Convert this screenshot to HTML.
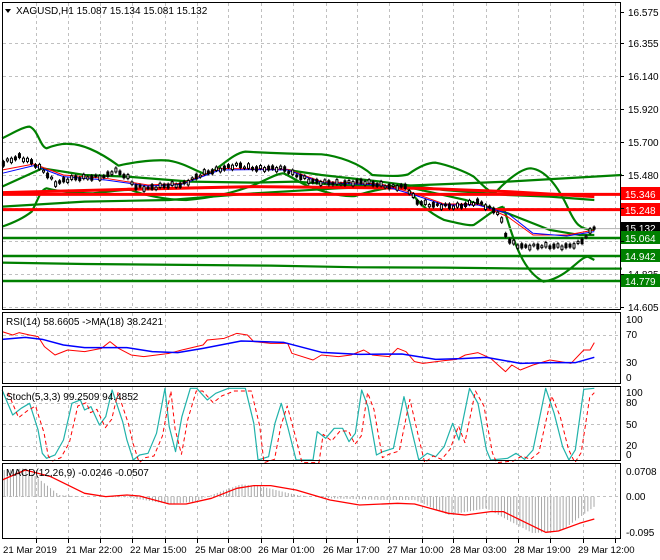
<!DOCTYPE html>
<html><head><meta charset="utf-8"><style>
html,body{margin:0;padding:0;background:#fff;}
svg{display:block;font-family:"Liberation Sans",sans-serif;font-size:10.5px;}
</style></head><body>
<svg id="s" width="660" height="560" viewBox="0 0 660 560" xmlns="http://www.w3.org/2000/svg">
<rect width="660" height="560" fill="#fff"/>
<g id="grid" stroke="#c0c0c0" stroke-dasharray="3,3" stroke-width="1"></g>
<g transform="scale(0.423,0.3333)" fill="none" stroke-linejoin="round">
 <g stroke="#008000" stroke-width="2.2">
  <path vector-effect="non-scaling-stroke" d="M5,415 C30,400 55,380 70,380 C90,390 95,440 110,445 C130,435 150,430 165,432 C190,432 230,450 280,497 C320,485 370,478 400,482 C440,490 470,520 490,523 C520,505 550,460 580,455 C620,458 700,462 760,463 C800,468 850,490 880,525 C910,528 950,530 965,523 C990,500 1010,488 1030,488 C1060,495 1100,515 1120,530 C1140,555 1160,580 1170,580"/>
  <path vector-effect="non-scaling-stroke" d="M5,680 C40,665 60,650 75,635 C90,600 95,570 110,565 C140,575 180,580 220,580 C260,575 290,568 310,570 C340,585 390,600 440,600 C500,595 560,575 600,555 C630,540 655,520 670,520 C690,530 720,560 760,572 C790,585 820,590 840,588 C880,570 930,560 960,560 C980,590 1000,630 1050,660 C1090,672 1110,678 1120,675 C1150,650 1170,625 1190,620"/>
  <polyline vector-effect="non-scaling-stroke" points="5,560 100,505 200,525 300,530 450,545 600,548 700,545 800,555 960,560 1100,600 1200,640 1300,690 1370,705 1405,705"/>
  <path vector-effect="non-scaling-stroke" d="M1170,580 C1190,550 1230,505 1255,505 C1290,510 1320,560 1345,630 C1360,670 1370,690 1405,690"/>
  <path vector-effect="non-scaling-stroke" d="M1190,620 C1210,700 1230,810 1285,845 C1340,835 1370,770 1390,770 L1405,780"/>
  <polyline vector-effect="non-scaling-stroke" points="680,510 760,525 900,545 1050,570 1200,585 1300,590 1405,600"/>
  <polyline vector-effect="non-scaling-stroke" points="5,620 200,605 400,600 600,580 800,565 1000,555 1200,545 1470,525"/>
  <polyline vector-effect="non-scaling-stroke" points="5,788 200,792 640,797 850,802 1050,803 1260,806 1470,806"/>
 </g>
 <line x1="5" y1="686" x2="1470" y2="686" stroke="#b0b0b0" stroke-width="1" vector-effect="non-scaling-stroke"/>
 <line x1="5" y1="714" x2="1470" y2="714" stroke="#008000" stroke-width="2.5" vector-effect="non-scaling-stroke"/>
 <line x1="5" y1="768" x2="1470" y2="768" stroke="#008000" stroke-width="2.5" vector-effect="non-scaling-stroke"/>
 <line x1="5" y1="843" x2="1470" y2="843" stroke="#008000" stroke-width="2.5" vector-effect="non-scaling-stroke"/>
 <polyline points="5,578 300,568 600,560 1000,565 1200,575 1405,590" stroke="#ff0000" stroke-width="3" vector-effect="non-scaling-stroke"/>
 <line x1="5" y1="583" x2="1470" y2="583" stroke="#ff0000" stroke-width="3" vector-effect="non-scaling-stroke"/>
 <line x1="5" y1="629" x2="1470" y2="629" stroke="#ff0000" stroke-width="3" vector-effect="non-scaling-stroke"/>
 <polyline points="5,510 80,492 150,525 250,535 350,555 430,550 520,505 600,507 680,508 760,545 900,552 980,580 1050,612 1130,612 1200,650 1260,705 1340,705 1405,690" stroke="#ff0000" stroke-width="1" vector-effect="non-scaling-stroke"/>
 <polyline points="5,520 80,497 150,530 250,540 350,558 430,553 520,510 600,509 680,510 760,548 900,555 980,585 1050,615 1130,615 1200,640 1260,700 1340,708 1405,695" stroke="#0000ff" stroke-width="1" vector-effect="non-scaling-stroke"/>
 <polyline id="price" stroke="none" points="5,490 45,470 80,490 110,520 130,550 170,535 250,530 270,510 300,530 320,560 350,565 400,555 430,555 480,520 560,495 600,505 670,505 690,520 740,545 800,550 860,545 920,560 960,560 985,605 1020,615 1080,620 1130,605 1180,640 1200,720 1230,740 1280,738 1340,740 1370,730 1400,690 1405,680"/>
 <g id="candles" stroke="#000"></g>
</g>
<g transform="translate(0,300) scale(0.423,0.3333)" fill="none" stroke-linejoin="round">
 <g id="hist" stroke="#a8a8a8" stroke-width="1"></g>
 <polyline points="5,95 30,105 45,98 70,105 90,110 105,140 130,165 160,150 200,155 240,145 260,125 280,145 310,165 340,170 400,160 430,150 480,135 490,120 530,115 560,100 585,105 600,125 640,130 680,130 690,160 740,180 760,165 800,170 830,165 860,150 880,165 920,170 940,145 960,155 980,185 1000,190 1050,182 1080,178 1100,165 1130,158 1160,175 1195,215 1210,195 1230,210 1260,195 1300,180 1350,190 1380,150 1395,150 1405,128" stroke="#ff0000" stroke-width="1" vector-effect="non-scaling-stroke"/>
 <polyline points="5,118 60,112 100,118 150,135 200,143 300,143 360,155 420,158 480,145 570,123 670,127 760,157 850,163 950,162 1030,178 1090,176 1150,172 1230,190 1300,188 1360,188 1405,172" stroke="#0000ff" stroke-width="1.5" vector-effect="non-scaling-stroke"/>
 <polyline points="5,270 30,345 50,325 70,310 90,390 100,460 110,475 130,465 150,420 170,310 190,300 200,330 215,320 235,375 250,350 265,270 290,365 300,420 315,480 330,465 350,460 370,400 390,265 400,380 415,455 430,350 450,265 465,265 490,300 510,280 540,265 580,265 600,370 610,480 635,470 650,370 665,310 680,380 700,480 740,480 750,395 770,415 790,385 810,385 825,425 840,400 855,270 870,320 890,465 905,455 930,445 955,290 975,400 990,480 1010,460 1030,470 1050,440 1070,370 1085,420 1110,265 1130,310 1150,450 1160,480 1200,475 1220,460 1240,478 1260,450 1290,265 1310,340 1330,440 1345,480 1360,450 1380,268 1405,265" stroke="#20b2aa" stroke-width="1.2" vector-effect="non-scaling-stroke"/>
 <polyline transform="translate(14,8)" points="5,270 30,345 50,325 70,310 90,390 100,460 110,475 130,465 150,420 170,310 190,300 200,330 215,320 235,375 250,350 265,270 290,365 300,420 315,480 330,465 350,460 370,400 390,265 400,380 415,455 430,350 450,265 465,265 490,300 510,280 540,265 580,265 600,370 610,480 635,470 650,370 665,310 680,380 700,480 740,480 750,395 770,415 790,385 810,385 825,425 840,400 855,270 870,320 890,465 905,455 930,445 955,290 975,400 990,480 1010,460 1030,470 1050,440 1070,370 1085,420 1110,265 1130,310 1150,450 1160,480 1200,475 1220,460 1240,470 1260,450 1290,280 1310,340 1330,440 1345,480 1360,450 1380,285 1391,270" stroke="#ff0000" stroke-width="1" stroke-dasharray="4,3" vector-effect="non-scaling-stroke"/>
 <polyline points="5,540 60,510 120,530 200,580 250,590 300,585 330,588 400,612 440,612 500,595 560,565 600,557 640,557 700,570 780,600 850,615 940,610 980,612 1060,640 1100,645 1160,635 1190,635 1230,660 1290,697 1320,693 1370,670 1405,657" stroke="#ff0000" stroke-width="1.3" vector-effect="non-scaling-stroke"/>
</g>
<g fill="none" stroke="#000" stroke-width="1">
 <rect x="2.5" y="2.5" width="618" height="307"/>
 <rect x="2.5" y="312.5" width="618" height="71"/>
 <rect x="2.5" y="386.5" width="618" height="74"/>
 <rect x="2.5" y="463.5" width="618" height="75"/>
</g>
<g fill="#000" font-size="10">
 <path d="M5,9 L11,9 L8,13 Z"/>
 <text x="16" y="14">XAGUSD,H1  15.087 15.134 15.081 15.132</text>
 <text x="6" y="325">RSI(14) 58.6605  -&gt;MA(18) 38.2421</text>
 <text x="6" y="400">Stoch(5,3,3) 99.2509 94.4852</text>
 <text x="6" y="476">MACD(12,26,9) -0.0246 -0.0507</text>
 <text x="628" y="16">16.575</text><text x="628" y="47">16.355</text><text x="628" y="80">16.140</text>
 <text x="628" y="113">15.920</text><text x="628" y="146">15.700</text><text x="628" y="179">15.480</text>
 <text x="628" y="278">14.825</text><text x="628" y="311">14.605</text>
 <text x="626" y="323">100</text><text x="626" y="338">70</text><text x="626" y="366">30</text><text x="626" y="381">0</text>
 <text x="626" y="396">100</text><text x="626" y="406">80</text><text x="626" y="428">50</text><text x="626" y="449">20</text><text x="626" y="458">0</text>
 <text x="626" y="475">0.0708</text><text x="626" y="500">0.00</text><text x="626" y="536">-0.095</text>
</g>
<g font-size="10">
 <rect x="621" y="187" width="39" height="13" fill="#ff0000"/><text x="625" y="198" fill="#fff">15.346</text>
 <rect x="621" y="203" width="39" height="13" fill="#ff0000"/><text x="625" y="214" fill="#fff">15.248</text>
 <rect x="621" y="222" width="39" height="12" fill="#000"/><text x="625" y="232" fill="#fff">15.132</text>
 <rect x="621" y="231" width="39" height="13" fill="#008000"/><text x="625" y="242" fill="#fff">15.064</text>
 <rect x="621" y="249" width="39" height="13" fill="#008000"/><text x="625" y="260" fill="#fff">14.942</text>
 <rect x="621" y="274" width="39" height="13" fill="#008000"/><text x="625" y="285" fill="#fff">14.779</text>
</g>
<g font-size="9.6" fill="#000">
 <text x="3" y="553">21 Mar 2019</text><text x="66" y="553">21 Mar 22:00</text><text x="130" y="553">22 Mar 15:00</text>
 <text x="195" y="553">25 Mar 08:00</text><text x="258" y="553">26 Mar 01:00</text><text x="323" y="553">26 Mar 17:00</text>
 <text x="387" y="553">27 Mar 10:00</text><text x="450" y="553">28 Mar 03:00</text><text x="514" y="553">28 Mar 19:00</text>
 <text x="578" y="553">29 Mar 12:00</text>
</g>
<g id="ticks" stroke="#000"></g>
</svg>
<script>
(function(){
var NS="http://www.w3.org/2000/svg";
function el(p,t,a){var e=document.createElementNS(NS,t);for(var k in a)e.setAttribute(k,a[k]);p.appendChild(e);return e;}
var g=document.getElementById('grid');
var gx=[85,160,237,312,390,465,540,617,693,770,845,920,997,1072,1148,1225,1300,1378,1453];
gx.forEach(function(z){var x=Math.round(z*0.423)+0.5;
 [[3,309],[313,383],[387,460],[464,538]].forEach(function(r){el(g,'line',{x1:x,y1:r[0],x2:x,y2:r[1]});});});
[43,76,109,142,175,208,241,274,307].forEach(function(y){el(g,'line',{x1:3,y1:y+.5,x2:620,y2:y+.5});});
[335,362,403,424,446,496].forEach(function(y){el(g,'line',{x1:3,y1:y+.5,x2:620,y2:y+.5});});
var t=document.getElementById('ticks');
gx.forEach(function(z){var x=Math.round(z*0.423)+0.5;el(t,'line',{x1:x,y1:539,x2:x,y2:543});});
[12,43,76,109,142,175,208,241,274,307].forEach(function(y){el(t,'line',{x1:620,y1:y+.5,x2:624,y2:y+.5});});
var pts=document.getElementById('price').getAttribute('points').trim().split(/\s+/).map(function(s){return s.split(',').map(Number);});
function py(x){for(var i=1;i<pts.length;i++){if(x<=pts[i][0]){var a=pts[i-1],b=pts[i];return a[1]+(b[1]-a[1])*(x-a[0])/(b[0]-a[0]);}}return pts[pts.length-1][1];}
var c=document.getElementById('candles');
var n=0;
for(var x=8;x<1405;x+=9.5){n++;var y=py(x)+Math.sin(n*2.3)*4,s=Math.sin(n*1.7)*5;
 el(c,'line',{x1:x,y1:y-Math.abs(s)-7,x2:x,y2:y+Math.abs(s)+7,'stroke-width':1,'vector-effect':'non-scaling-stroke'});
 el(c,'rect',{x:x-2.4,y:y-Math.abs(s)-2,width:4.8,height:Math.abs(s)*2+4,fill:(s>0?'#000':'#fff'),'stroke-width':1,'vector-effect':'non-scaling-stroke'});}
var hp=[[10,510],[60,505],[140,585],[200,590],[300,592],[400,612],[460,605],[500,585],[570,553],[620,560],[700,585],[780,595],[900,600],[980,600],[1060,645],[1150,625],[1200,660],[1260,700],[1330,690],[1405,620]];
function hy(x){for(var i=1;i<hp.length;i++){if(x<=hp[i][0]){var a=hp[i-1],b=hp[i];return a[1]+(b[1]-a[1])*(x-a[0])/(b[0]-a[0]);}}return 620;}
var h=document.getElementById('hist');
for(var x=10;x<=1405;x+=7.3){el(h,'line',{x1:x,y1:590,x2:x,y2:hy(x),'vector-effect':'non-scaling-stroke'});}
})();
</script>
</body></html>
